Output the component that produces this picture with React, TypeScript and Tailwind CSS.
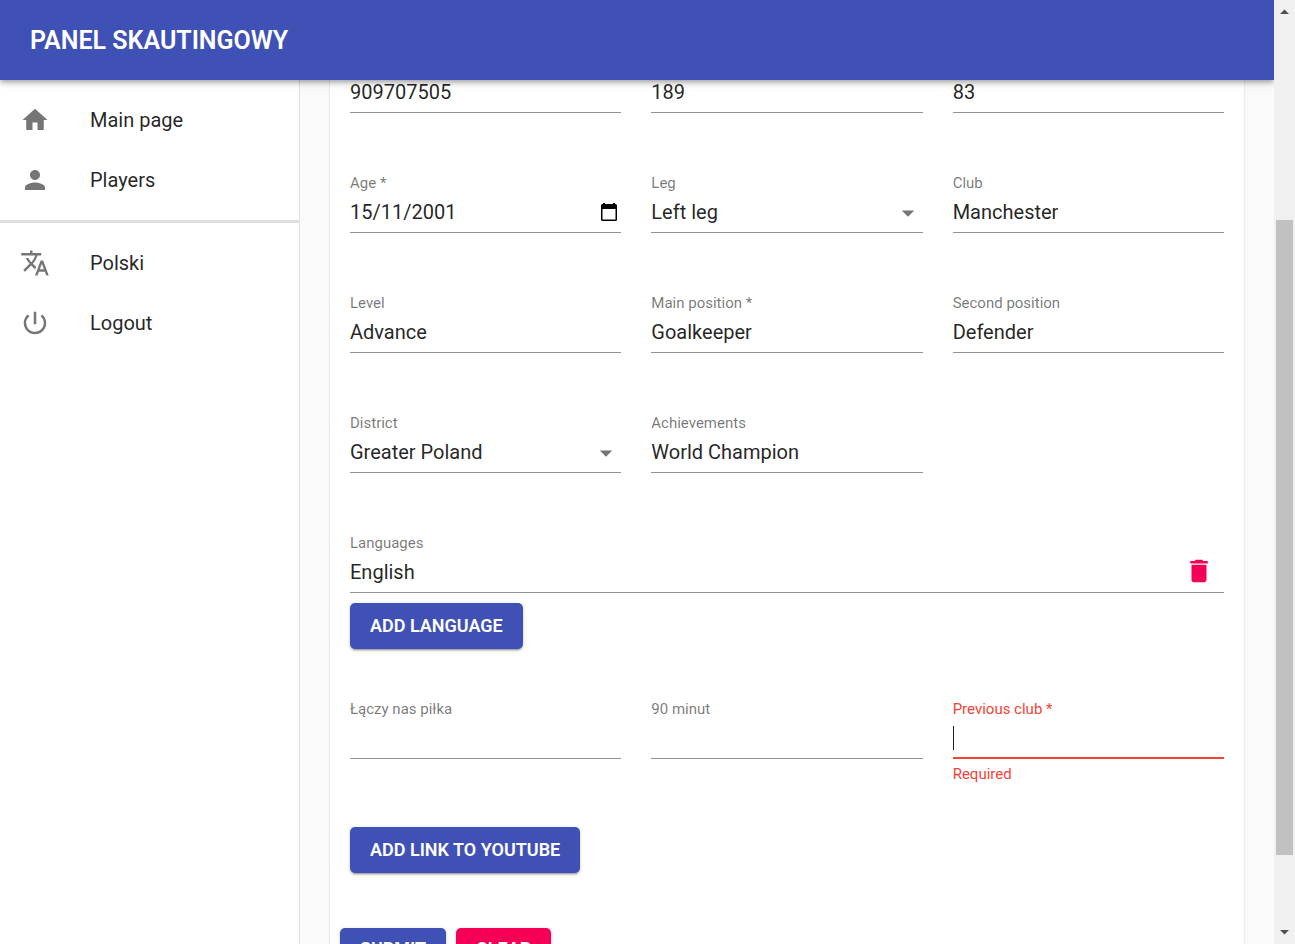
import { useId, useState } from "react";
import type { ReactNode } from "react";
import {
  MdArrowDropDown,
  MdDelete,
  MdHome,
  MdPerson,
  MdPowerSettingsNew,
  MdTranslate,
} from "react-icons/md";

function NavItem({ icon, children }: { icon: ReactNode; children: ReactNode }) {
  return (
    <li>
      <a href="#" className="flex h-15 items-center px-5 text-xl text-black/87 hover:bg-black/5">
        <span className="flex w-[70px] shrink-0 text-[30px] text-black/54">{icon}</span>
        {children}
      </a>
    </li>
  );
}

type FieldProps = {
  label: string;
  value?: string;
  options?: string[];
  error?: string;
  adornment?: ReactNode;
};

function Field({ label, value = "", options, error, adornment }: FieldProps) {
  const id = useId();
  const [current, setCurrent] = useState(value);
  const line = error
    ? "border-b-2 border-[#f44336]"
    : "border-b border-[#949494]";
  const control =
    "h-full w-full min-w-0 flex-1 appearance-none rounded-none bg-transparent p-0 pb-0.5 text-xl text-black/87 outline-none";

  return (
    <div className="min-w-0">
      <label
        htmlFor={id}
        className={
          error
            ? "block h-5 text-[15px] leading-5 text-[#f44336]"
            : "block h-5 text-[15px] leading-5 text-black/54"
        }
      >
        {label}
      </label>
      <div className={`relative flex h-10 items-center ${line}`}>
        {options ? (
          <>
            <select
              id={id}
              value={current}
              onChange={(e) => setCurrent(e.target.value)}
              className={control}
            >
              {options.map((option) => (
                <option key={option}>{option}</option>
              ))}
            </select>
            <MdArrowDropDown className="pointer-events-none absolute right-0 text-[30px] text-black/54" />
          </>
        ) : (
          <input
            id={id}
            type="text"
            value={current}
            onChange={(e) => setCurrent(e.target.value)}
            className={error ? `${control} caret-transparent` : control}
          />
        )}
        {error && <span className="absolute left-0 h-6 w-px bg-black/87" />}
        {adornment}
      </div>
      {error && <p className="mt-1 text-[15px] leading-[22px] text-[#f44336]">{error}</p>}
    </div>
  );
}

type ButtonProps = { children: ReactNode; secondary?: boolean; compact?: boolean };

function Button({ children, secondary = false, compact = false }: ButtonProps) {
  return (
    <button
      type="button"
      className={`rounded-[5px] px-5 text-lg font-semibold text-white uppercase shadow-[0px_3px_1px_-2px_rgba(0,0,0,0.2),0px_2px_2px_0px_rgba(0,0,0,0.14),0px_1px_5px_0px_rgba(0,0,0,0.12)] ${
        secondary ? "bg-[#f50057]" : "bg-[#3f51b5]"
      } ${compact ? "h-[42px]" : "h-[46px]"}`}
    >
      {children}
    </button>
  );
}

function CalendarButton() {
  return (
    <button type="button" aria-label="Open calendar" className="mr-1 mb-0.5 shrink-0 text-black">
      <svg width="16" height="18" viewBox="0 0 16 18" fill="currentColor">
        <path d="M2 0h2v1h8V0h2v1h.5A1.5 1.5 0 0 1 16 2.500V16.500A1.500 1.500 0 0 1 14.500 18h-13A1.500 1.500 0 0 1 0 16.500V2.500A1.500 1.500 0 0 1 1.500 1H2zM1.500 6v10.500h13V6z" />
      </svg>
    </button>
  );
}

function Scrollbar() {
  return (
    <div aria-hidden="true" className="flex w-[21px] shrink-0 flex-col items-center bg-[#f0f0f0]">
      <svg className="h-[21px] w-[21px] shrink-0" viewBox="0 0 21 21" fill="#505050">
        <path d="M6 14 10.500 9.500 15 14z" />
      </svg>
      <div className="grow-[199] basis-0" />
      <div className="w-[17px] grow-[635] basis-0 bg-[#c1c1c1]" />
      <div className="grow-[68] basis-0" />
      <svg className="h-[21px] w-[21px] shrink-0" viewBox="0 0 21 21" fill="#505050">
        <path d="M6 7 10.500 11.500 15 7z" />
      </svg>
    </div>
  );
}

export default function App() {
  return (
    <div className="flex h-screen overflow-hidden bg-[#fafafa] font-[Roboto,sans-serif] text-black/87">
      <div className="flex min-w-0 flex-1 flex-col overflow-hidden">
        <header className="relative z-10 flex h-20 shrink-0 items-center bg-[#3f51b5] px-[30px] pt-0.5 shadow-[0px_2px_4px_-1px_rgba(0,0,0,0.2),0px_4px_5px_0px_rgba(0,0,0,0.14),0px_1px_10px_0px_rgba(0,0,0,0.12)]">
          <h1 className="text-[25px] font-semibold text-white uppercase">Panel skautingowy</h1>
        </header>

        <div className="flex min-h-0 flex-1">
          <nav className="w-[300px] shrink-0 border-r border-[#e0e0e0] bg-white">
            <ul className="py-2.5">
              <NavItem icon={<MdHome />}>Main page</NavItem>
              <NavItem icon={<MdPerson />}>Players</NavItem>
            </ul>
            <hr className="border-t-3 border-[#e0e0e0]" />
            <ul className="py-2.5">
              <NavItem icon={<MdTranslate />}>Polski</NavItem>
              <NavItem icon={<MdPowerSettingsNew />}>Logout</NavItem>
            </ul>
          </nav>

          <main className="-mt-[27px] min-w-0 flex-1 px-[30px]">
            <form className="rounded-[5px] bg-white px-2.5 pb-2.5 shadow-[0px_2px_1px_-1px_rgba(0,0,0,0.2),0px_1px_1px_0px_rgba(0,0,0,0.14),0px_1px_3px_0px_rgba(0,0,0,0.12)]">
              <div className="px-2.5">
                <div className="grid grid-cols-3 gap-x-[30px] gap-y-15">
                  <Field label="Phone" value="909707505" />
                  <Field label="Height" value="189" />
                  <Field label="Weight" value="83" />
                  <Field label="Age *" value="15/11/2001" adornment={<CalendarButton />} />
                  <Field label="Leg" value="Left leg" options={["Left leg", "Right leg"]} />
                  <Field label="Club" value="Manchester" />
                  <Field label="Level" value="Advance" />
                  <Field label="Main position *" value="Goalkeeper" />
                  <Field label="Second position" value="Defender" />
                  <Field
                    label="District"
                    value="Greater Poland"
                    options={["Greater Poland", "Lesser Poland"]}
                  />
                  <Field label="Achievements" value="World Champion" />
                </div>

                <div className="mt-15">
                  <Field
                    label="Languages"
                    value="English"
                    adornment={
                      <button
                        type="button"
                        aria-label="Delete language"
                        className="mr-2.5 mb-1 shrink-0 text-[30px] text-[#f50057]"
                      >
                        <MdDelete />
                      </button>
                    }
                  />
                  <div className="mt-2.5 flex">
                    <Button>Add language</Button>
                  </div>
                </div>

                <div className="mt-[50px] grid grid-cols-3 gap-x-[30px]">
                  <Field label="Łączy nas piłka" />
                  <Field label="90 minut" />
                  <Field label="Previous club *" error="Required" />
                </div>

                <div className="mt-[42px] flex">
                  <Button>Add link to YouTube</Button>
                </div>
              </div>

              <div className="mt-[55px] flex gap-2.5">
                <Button compact>Submit</Button>
                <Button compact secondary>
                  Clear
                </Button>
              </div>
            </form>
          </main>
        </div>
      </div>
      <Scrollbar />
    </div>
  );
}
